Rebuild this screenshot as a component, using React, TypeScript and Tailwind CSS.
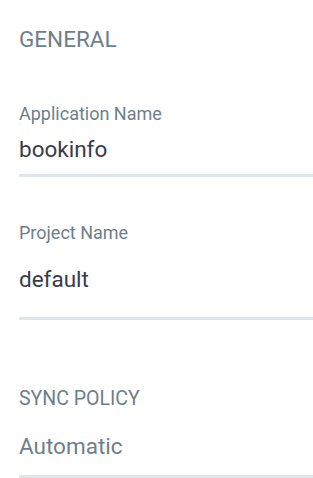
import React from "react";

const font = { fontFamily: "Roboto, 'Liberation Sans', sans-serif" };

const Divider: React.FC<{ className?: string }> = ({ className = "" }) => (
  <div className={`h-[3px] bg-[#dee6eb] ${className}`} />
);

export default function App() {
  return (
    <div className="w-[313px] h-[478px] bg-white overflow-hidden pl-[19px]" style={font}>
      {/* General */}
      <div className="pt-[27px] text-[22.5px] leading-[24px] text-[#6d7f8b]">GENERAL</div>

      <div className="mt-[53px] text-[18px] leading-[20px] text-[#6d7f8b]">Application Name</div>
      <div className="mt-[11px] text-[22.5px] leading-[28px] text-[#363c4a]">bookinfo</div>
      <Divider className="mt-[11px]" />

      <div className="mt-[46px] text-[18px] leading-[20px] text-[#6d7f8b]">Project Name</div>
      <div className="mt-[22px] text-[22.5px] leading-[28px] text-[#363c4a]">default</div>
      <Divider className="mt-[24px]" />

      {/* Sync policy */}
      <div className="mt-[67px] text-[19.5px] leading-[24px] text-[#6d7f8b]">SYNC POLICY</div>
      <div className="mt-[21px] text-[22.5px] leading-[28px] text-[#6d7f8b]">Automatic</div>
      <Divider className="mt-[15px]" />
    </div>
  );
}
